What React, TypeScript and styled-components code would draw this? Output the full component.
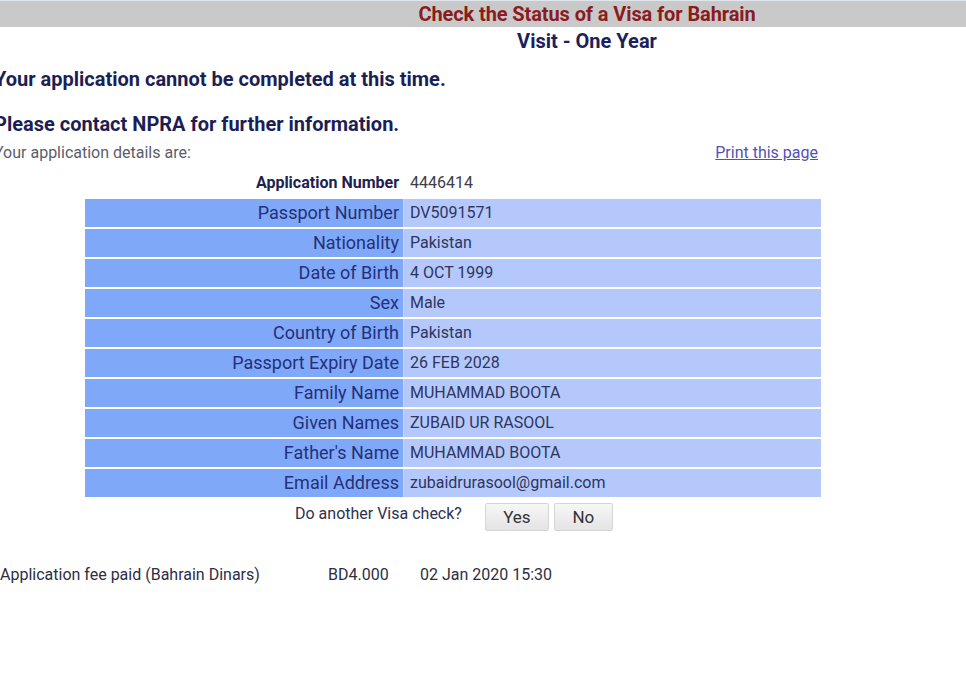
import React from "react";
import styled, { createGlobalStyle } from "styled-components";

const GlobalStyle = createGlobalStyle`
  html, body { margin: 0; padding: 0; background: #ffffff; overflow: hidden; }
  body { font-family: Roboto, "Liberation Sans", Arial, sans-serif; width: 966px; }
`;

const Page = styled.div`
  width: 966px;
  height: 684px;
  overflow: hidden;
  display: flex;
  flex-direction: column;
`;

const HeaderBar = styled.div`
  height: 27px;
  background: #c9c9c9;
  border-top: 1px solid #dfe6ee;
  box-sizing: border-box;
  display: flex;
  align-items: center;
  justify-content: center;
  padding-left: 208px;
`;

const Title = styled.h1`
  margin: 0;
  font-size: 20px;
  font-weight: 700;
  color: #8a1c1f;
  letter-spacing: -0.1px;
`;

const SubTitle = styled.h2`
  margin: 3px 0 0 0;
  height: 22px;
  line-height: 22px;
  padding-left: 208px;
  text-align: center;
  font-size: 20px;
  font-weight: 700;
  color: #1c1f5c;
`;

const Content = styled.div`
  margin-left: -6px;
  display: flex;
  flex-direction: column;
`;

const Notice = styled.p<{ $top: number }>`
  margin: ${(p) => p.$top}px 0 0 0;
  font-size: 20px;
  line-height: 22px;
  font-weight: 700;
  color: #1c1f55;
`;

const DetailsLine = styled.div`
  margin-top: 9px;
  width: 824px;
  display: flex;
  justify-content: space-between;
  align-items: center;
  height: 16px;
`;

const Small = styled.span`
  font-size: 16px;
  color: #5a5e6a;
`;

const PrintLink = styled.a`
  font-size: 16px;
  color: #5252b4;
  text-decoration: underline;
  cursor: pointer;
`;

const Table = styled.div`
  margin-top: 9px;
  margin-left: 91px;
  width: 736px;
  display: flex;
  flex-direction: column;
  gap: 2px;
`;

const Row = styled.div<{ $plain?: boolean }>`
  display: grid;
  grid-template-columns: 318px 417px;
  column-gap: 1px;
  height: 28px;
  background: ${(p) => (p.$plain ? "transparent" : "#c8d6fb")};
`;

const Label = styled.div<{ $plain?: boolean }>`
  background: ${(p) => (p.$plain ? "transparent" : "#80a8f8")};
  text-align: right;
  padding-right: 4px;
  font-size: ${(p) => (p.$plain ? "16px" : "18px")};
  font-weight: ${(p) => (p.$plain ? 700 : 400)};
  color: ${(p) => (p.$plain ? "#1e2150" : "#24307a")};
  line-height: 28px;
  white-space: nowrap;
`;

const Value = styled.div<{ $plain?: boolean }>`
  background: ${(p) => (p.$plain ? "transparent" : "#b4c8fb")};
  padding-left: 6px;
  font-size: 16px;
  color: ${(p) => (p.$plain ? "#3a3d4a" : "#2e3560")};
  line-height: 28px;
  white-space: nowrap;
`;

const CheckRow = styled.div`
  margin-top: 6px;
  margin-left: 301px;
  display: flex;
  align-items: center;
  gap: 5px;
`;

const CheckText = styled.span`
  font-size: 16px;
  color: #2e3150;
  margin-right: 18px;
  margin-top: -8px;
`;

const Btn = styled.button<{ $w: number }>`
  width: ${(p) => p.$w}px;
  height: 28px;
  border: 1px solid #d6d6d6;
  border-radius: 2px;
  background: linear-gradient(#f7f7f7, #e4e4e4);
  font-family: Roboto, "Liberation Sans", Arial, sans-serif;
  font-size: 17px;
  color: #333;
  padding: 0;
`;

const Footer = styled.div`
  margin-top: 34px;
  margin-left: 6px;
  display: flex;
  font-size: 16px;
  color: #2c2f44;
`;

const FooterCell = styled.span<{ $w: number }>`
  width: ${(p) => p.$w}px;
  white-space: nowrap;
`;

const rows: [string, string][] = [
  ["Passport Number", "DV5091571"],
  ["Nationality", "Pakistan"],
  ["Date of Birth", "4 OCT 1999"],
  ["Sex", "Male"],
  ["Country of Birth", "Pakistan"],
  ["Passport Expiry Date", "26 FEB 2028"],
  ["Family Name", "MUHAMMAD BOOTA"],
  ["Given Names", "ZUBAID UR RASOOL"],
  ["Father's Name", "MUHAMMAD BOOTA"],
  ["Email Address", "zubaidrurasool@gmail.com"],
];

export default function App() {
  return (
    <Page>
      <GlobalStyle />
      <HeaderBar>
        <Title>Check the Status of a Visa for Bahrain</Title>
      </HeaderBar>
      <SubTitle>Visit - One Year</SubTitle>
      <Content>
        <Notice $top={16}>Your application cannot be completed at this time.</Notice>
        <Notice $top={23}>Please contact NPRA for further information.</Notice>
        <DetailsLine>
          <Small>Your application details are:</Small>
          <PrintLink>Print this page</PrintLink>
        </DetailsLine>
        <Table>
          <Row $plain>
            <Label $plain>Application Number</Label>
            <Value $plain>4446414</Value>
          </Row>
          {rows.map(([k, v]) => (
            <Row key={k}>
              <Label>{k}</Label>
              <Value>{v}</Value>
            </Row>
          ))}
        </Table>
        <CheckRow>
          <CheckText>Do another Visa check?</CheckText>
          <Btn $w={64}>Yes</Btn>
          <Btn $w={59}>No</Btn>
        </CheckRow>
        <Footer>
          <FooterCell $w={328}>Application fee paid (Bahrain Dinars)</FooterCell>
          <FooterCell $w={92}>BD4.000</FooterCell>
          <FooterCell $w={150}>02 Jan 2020 15:30</FooterCell>
        </Footer>
      </Content>
    </Page>
  );
}
